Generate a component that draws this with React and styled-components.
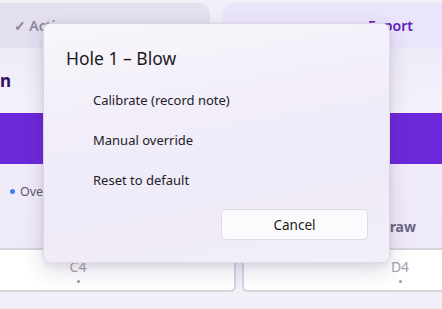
import React from "react";
import styled, { createGlobalStyle } from "styled-components";

const GlobalStyle = createGlobalStyle`
  html, body {
    margin: 0;
    padding: 0;
    background: #f3f0fa;
    font-family: "Noto Sans", "Open Sans", sans-serif;
  }
`;

const Viewport = styled.div`
  position: relative;
  width: 442px;
  height: 309px;
  overflow: hidden;
  background: #f2eff9;
`;

const TabRow = styled.div`
  display: flex;
  gap: 13px;
  margin-left: -125px;
  padding-top: 3px;
`;

const Tab = styled.div`
  flex: 0 0 335px;
  height: 45px;
  display: flex;
  align-items: center;
  justify-content: center;
  border-radius: 11px 11px 0 0;
  font-size: 14px;
  font-weight: 600;
  background: ${({ active }) => (active ? "#ebe5fb" : "#e4e0ef")};
  color: ${({ active }) => (active ? "#5b21b6" : "#8b8699")};
`;

const Header = styled.div`
  height: 65px;
  display: flex;
  align-items: center;
  background: linear-gradient(#efebf8, #f5f2fb);
`;

const TitleEdge = styled.div`
  width: 11px;
  display: flex;
  justify-content: flex-end;
  white-space: nowrap;
`;

const PageTitle = styled.h2`
  margin: 0;
  font-size: 17px;
  font-weight: 700;
  color: #2e1065;
`;

const PrimaryBar = styled.div`
  height: 51px;
  background: #6d28d9;
`;

const Legend = styled.div`
  height: 84px;
  display: grid;
  grid-template-rows: 1fr 1fr;
  padding: 10px 26px 4px 10px;
  box-sizing: border-box;
  background: linear-gradient(#f1ecfa, #efeaf8);
`;

const LegendItem = styled.div`
  display: flex;
  align-items: center;
  gap: 5px;
  font-size: 12.5px;
  color: #5c566e;
`;

const Dot = styled.span`
  width: 5px;
  height: 5px;
  border-radius: 50%;
  background: ${({ color }) => color};
`;

const ColumnLabel = styled.div`
  justify-self: end;
  align-self: center;
  font-size: 14px;
  font-weight: 700;
  color: #6b6580;
`;

const KeyRow = styled.div`
  display: flex;
  gap: 6px;
  margin-left: -80px;
  border-top: 2px solid #d8d4de;
`;

const Key = styled.div`
  flex: 0 0 316px;
  height: 42px;
  box-sizing: border-box;
  background: #ffffff;
  border: 2px solid #d8d4de;
  border-top: none;
  border-radius: 0 0 6px 6px;
  display: flex;
  flex-direction: column;
  align-items: center;
  padding-top: 9px;
  gap: 5px;
`;

const KeyNote = styled.span`
  font-size: 14px;
  line-height: 16px;
  color: #a5a1ad;
`;

const KeyDot = styled.span`
  width: 3px;
  height: 3px;
  border-radius: 50%;
  background: #9e9aa6;
`;

const Dialog = styled.div`
  position: absolute;
  left: 43px;
  top: 23px;
  width: 347px;
  height: 240px;
  box-sizing: border-box;
  border-radius: 8px;
  border: 1px solid rgba(120, 110, 140, 0.18);
  background: linear-gradient(170deg, #f8f6fb 0%, #f1ecf9 45%, #efeaf7 70%, #f3f0f8 100%);
  box-shadow: 0 8px 22px rgba(50, 30, 90, 0.16), 0 2px 6px rgba(50, 30, 90, 0.08);
  padding: 20px 21px 22px 22px;
  display: flex;
  flex-direction: column;
`;

const DialogTitle = styled.div`
  font-size: 17.5px;
  line-height: 28px;
  color: #1c1b20;
  margin-bottom: 8px;
`;

const MenuItem = styled.div`
  height: 40px;
  display: flex;
  align-items: center;
  padding-left: 27px;
  font-size: 13px;
  color: #222127;
`;

const Actions = styled.div`
  margin-top: auto;
  display: flex;
  justify-content: flex-end;
`;

const Button = styled.button`
  width: 147px;
  height: 31px;
  border-radius: 4px;
  border: 1px solid #dedbe4;
  background: #fbfafd;
  font-family: inherit;
  font-size: 13.5px;
  color: #1c1b20;
`;

export default function App() {
  return (
    <Viewport>
      <GlobalStyle />
      <TabRow>
        <Tab>✓ Active</Tab>
        <Tab active>Export</Tab>
      </TabRow>
      <Header>
        <TitleEdge>
          <PageTitle>Calibration</PageTitle>
        </TitleEdge>
      </Header>
      <PrimaryBar />
      <Legend>
        <LegendItem>
          <Dot color="#3b82f6" />
          Override
        </LegendItem>
        <ColumnLabel>Draw</ColumnLabel>
      </Legend>
      <KeyRow>
        <Key>
          <KeyNote>C4</KeyNote>
          <KeyDot />
        </Key>
        <Key>
          <KeyNote>D4</KeyNote>
          <KeyDot />
        </Key>
      </KeyRow>

      <Dialog>
        <DialogTitle>Hole 1 – Blow</DialogTitle>
        <MenuItem>Calibrate (record note)</MenuItem>
        <MenuItem>Manual override</MenuItem>
        <MenuItem>Reset to default</MenuItem>
        <Actions>
          <Button>Cancel</Button>
        </Actions>
      </Dialog>
    </Viewport>
  );
}
